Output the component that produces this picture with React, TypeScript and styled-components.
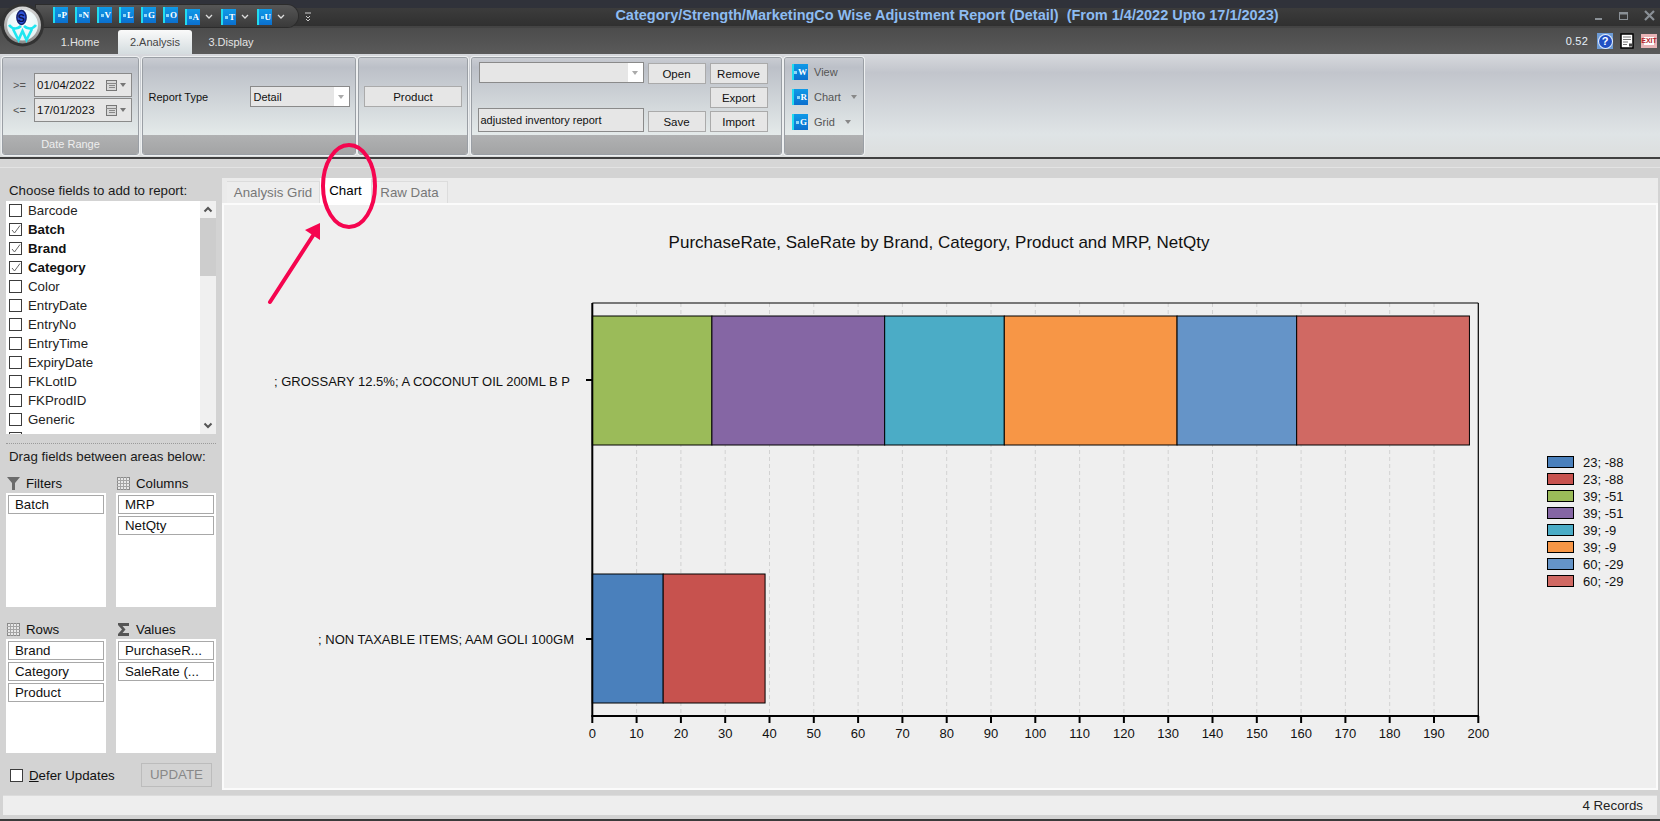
import React from "react";
import styled, { createGlobalStyle } from "styled-components";

const Global = createGlobalStyle`
  html, body { margin: 0; padding: 0; background: #d3d3d3; overflow: hidden; }
  * { box-sizing: border-box; }
  body { font-family: "Liberation Sans", Arial, sans-serif; }
`;

const Page = styled.div`
  position: relative;
  width: 1660px;
  height: 821px;
  display: flex;
  flex-direction: column;
  overflow: hidden;
  background: #d3d3d3;
  color: #111;
`;

/* ---------- title bar ---------- */
const TopBand = styled.div`
  height: 28px;
  flex: none;
  display: flex;
  background: linear-gradient(#30323a 0 8px, #3c3c3c 8px, #303030 26px, #444 26px);
`;
const QatPill = styled.div`
  margin: 5px 0 0 36px;
  height: 22px;
  width: 262px;
  padding: 2px 0 0 17px;
  display: flex;
  gap: 7px;
  border-radius: 0 11px 11px 0;
  background: linear-gradient(#565656, #3a3a3a);
  box-shadow: 0 0 0 1px #2c2c2c;
`;
const QatIcon = styled.span`
  width: 15px;
  height: 16px;
  flex: none;
  display: flex;
  align-items: center;
  justify-content: flex-end;
  padding-right: 1px;
  gap: 1px;
  background: linear-gradient(#0f9ae8, #0b6fce);
  border-left: 2px solid #22dcee;
  color: #fff;
  font: bold 9px "Liberation Serif", serif;
  &::before {
    content: "";
    width: 3px;
    height: 3px;
    background: #8fd6f6;
  }
`;
const QatGroup = styled.span`
  display: flex;
  align-items: center;
  gap: 4px;
`;
const QatCaret = styled.svg`
  width: 10px;
  height: 6px;
  flex: none;
`;
const Overflow = styled.svg`
  width: 6px;
  height: 9px;
  margin: 12px 0 0 7px;
  flex: none;
`;
const WindowTitle = styled.div`
  flex: 1;
  text-align: center;
  padding: 7px 12px 0 0;
  font-size: 14.5px;
  font-weight: bold;
  white-space: pre;
  color: #8dbcf2;
`;
const WindowButtons = styled.svg`
  width: 60px;
  height: 12px;
  margin: 10px 5px 0 0;
  flex: none;
`;
const TabRow = styled.div`
  height: 26px;
  flex: none;
  display: flex;
  align-items: flex-end;
  padding-left: 42px;
  background: linear-gradient(#4c4c4c, #5a5a5a);
`;
const AppTab = styled.div<{ $active?: boolean; $w: number }>`
  width: ${(p) => p.$w}px;
  height: 24px;
  display: flex;
  align-items: center;
  justify-content: center;
  font-size: 11px;
  color: ${(p) => (p.$active ? "#444" : "#e4e4e4")};
  border-radius: 3px 3px 0 0;
  background: ${(p) => (p.$active ? "linear-gradient(#fafafa, #d4dcdf)" : "transparent")};
`;
const StatusCluster = styled.div`
  margin-left: auto;
  height: 26px;
  display: flex;
  align-items: center;
  padding: 0 3px 0 0;
`;
const Version = styled.span`
  font-size: 11px;
  letter-spacing: 0.2px;
  color: #e8f0fa;
  margin-right: 9px;
`;
const HelpIcon = styled.span`
  width: 16px;
  height: 16px;
  background: #6d9bd6;
  display: flex;
  align-items: center;
  justify-content: center;
  margin-right: 7px;
  &::before {
    content: "?";
    width: 13px;
    height: 13px;
    border-radius: 50%;
    background: #2150c4;
    box-shadow: 0 0 0 1px #e6eefa;
    color: #fff;
    font: bold 11px/13px "Liberation Sans", sans-serif;
    text-align: center;
  }
`;
const DocIcon = styled.svg`
  width: 14px;
  height: 16px;
  margin-right: 7px;
`;
const ExitIcon = styled.span`
  width: 16px;
  height: 14px;
  background: #fff;
  color: #b3262d;
  font: bold 7px/14px "Liberation Sans", sans-serif;
  text-align: center;
  box-shadow: inset 0 0 0 3px #e8b4b6;
`;
const LogoMark = styled.svg`
  position: absolute;
  left: 0;
  top: 3px;
  width: 46px;
  height: 46px;
`;

/* ---------- ribbon ---------- */
const Ribbon = styled.div`
  height: 103px;
  flex: none;
  display: flex;
  gap: 2.5px;
  padding: 3px 0 2px 2px;
  background: linear-gradient(#d7d9dd, #c2c5cc 18%, #dfe4e6 78%, #dcdede 100%);
`;
const Group = styled.div<{ $w: number }>`
  width: ${(p) => p.$w}px;
  height: 98px;
  flex: none;
  display: flex;
  flex-direction: column;
  border: 1px solid #9a9fa5;
  border-radius: 3px;
  overflow: hidden;
  box-shadow: 0 0 0 1px #eef0f1;
`;
const GroupBody = styled.div`
  flex: 1;
  min-height: 0;
  display: flex;
  background: linear-gradient(#c9ccd2, #bcc0c8 12%, #e4eaea 100%);
`;
const GroupFooter = styled.div`
  height: 19px;
  flex: none;
  background: linear-gradient(#b0b1b2, #a3a4a5);
  color: #eee;
  font-size: 11px;
  line-height: 19px;
  text-align: center;
`;
const DateColumn = styled.div`
  padding: 15px 0 0 10px;
  display: flex;
  flex-direction: column;
  gap: 1px;
`;
const DateRow = styled.div`
  display: flex;
  align-items: center;
`;
const DateOp = styled.span`
  width: 21px;
  font-size: 11px;
  color: #555;
`;
const DateField = styled.div`
  width: 98px;
  height: 24px;
  display: flex;
  align-items: center;
  padding: 0 5px 0 2px;
  border: 1px solid #8a8a8a;
  background: #e6e6e6;
  font-size: 11.5px;
`;
const CalendarIcon = styled.svg`
  width: 11px;
  height: 11px;
  margin-left: auto;
`;
const SmallCaret = styled.svg`
  width: 6px;
  height: 4px;
  flex: none;
  margin-left: 3px;
`;
const CenterBody = styled(GroupBody)`
  align-items: center;
  padding: 0 5px;
`;
const FieldLabel = styled.span`
  width: 101px;
  margin-left: 1px;
  flex: none;
  font-size: 11px;
`;
const Combo = styled.div<{ $w: number }>`
  width: ${(p) => p.$w}px;
  height: 21px;
  flex: none;
  display: flex;
  align-items: center;
  padding-left: 3px;
  border: 1px solid #8a8a8a;
  background: #e6e6e6;
  font-size: 11px;
`;
const ComboArrow = styled.span`
  margin: 0 0 0 auto;
  width: 15px;
  height: 19px;
  background: #fff;
  display: flex;
  align-items: center;
  justify-content: center;
  &::before {
    content: "";
    border: 3.5px solid transparent;
    border-top: 4px solid #aaa;
    margin-top: 4px;
  }
`;
const PushButton = styled.button`
  width: 100%;
  height: 21px;
  padding: 0;
  border: 1px solid #aaa;
  background: #e6e6e6;
  color: #111;
  font: 11.5px "Liberation Sans", sans-serif;
`;
const ReportBody = styled(GroupBody)`
  padding: 4px 0 0 6px;
  gap: 4px;
`;
const ReportLeft = styled.div`
  width: 166px;
  height: 70px;
  display: flex;
  flex-direction: column;
  justify-content: space-between;
  align-items: flex-end;
`;
const NameInput = styled.div`
  width: 166px;
  height: 24px;
  line-height: 22px;
  padding-left: 2px;
  border: 1px solid #8a8a8a;
  background: #e6e6e6;
  font-size: 11px;
`;
const ButtonGrid = styled.div`
  margin-top: 1px;
  display: grid;
  grid-template-columns: 58px 58px;
  grid-template-rows: 21px 21px 21px;
  gap: 3px 4px;
  align-content: start;
`;
const GridSlot = styled.div<{ $row: number; $col: number }>`
  grid-row: ${(p) => p.$row};
  grid-column: ${(p) => p.$col};
`;
const CommandColumn = styled(GroupBody)`
  flex-direction: column;
  gap: 9px;
  padding: 6px 0 0 7px;
`;
const Command = styled.div`
  height: 16px;
  display: flex;
  align-items: center;
  font-size: 11px;
  color: #555;
`;
const CommandIcon = styled(QatIcon)`
  width: 16px;
  margin-right: 6px;
`;
const CommandCaret = styled.svg`
  width: 6px;
  height: 4px;
  margin-left: 10px;
`;

const Divider = styled.div`
  height: 2px;
  flex: none;
  background: #404040;
`;

/* ---------- main ---------- */
const Main = styled.div`
  height: 636px;
  flex: none;
  display: flex;
  background: linear-gradient(#d6d6d6 0 8px, #e3e3e3 8px 9px, #d3d3d3 9px);
`;
const FieldPanel = styled.div`
  width: 222px;
  flex: none;
  padding: 23px 6px 0;
  display: flex;
  flex-direction: column;
  font-size: 13.3px;
`;
const PanelHeading = styled.div`
  height: 18px;
  line-height: 18px;
  padding-left: 3px;
  white-space: nowrap;
  color: #1a1a1a;
`;
const FieldList = styled.div`
  margin-top: 1px;
  height: 233px;
  flex: none;
  display: flex;
  background: #fff;
  overflow: hidden;
`;
const FieldRows = styled.div`
  flex: 1;
  padding-left: 3px;
`;
const FieldRow = styled.label<{ $on?: boolean }>`
  height: 19px;
  display: flex;
  align-items: center;
  gap: 6px;
  font-weight: ${(p) => (p.$on ? "bold" : "normal")};
  color: ${(p) => (p.$on ? "#111" : "#222")};
`;
const Check = styled.span`
  width: 13px;
  height: 13px;
  flex: none;
  display: flex;
  background: #fff;
  border: 1px solid #3c3c3c;
`;
const ScrollBar = styled.div`
  width: 16px;
  flex: none;
  display: flex;
  flex-direction: column;
  background: #f0f0f0;
`;
const ScrollArrow = styled.svg`
  width: 16px;
  height: 17px;
  flex: none;
`;
const ScrollThumb = styled.div`
  height: 58px;
  flex: none;
  margin-bottom: auto;
  background: #cdcdcd;
`;
const Dots = styled.div`
  margin-top: 9px;
  height: 1px;
  flex: none;
  border-top: 1px dotted #9a9a9a;
  margin-bottom: 4px;
`;
const AreaGrid = styled.div`
  margin-top: 8px;
  display: grid;
  grid-template-columns: 100px 100px;
  grid-auto-rows: 146px;
  column-gap: 10px;
`;
const Area = styled.div`
  display: flex;
  flex-direction: column;
`;
const AreaHeader = styled.div`
  height: 19px;
  display: flex;
  align-items: center;
  gap: 6px;
  padding: 0 0 1px 1px;
`;
const AreaIcon = styled.svg`
  width: 13px;
  height: 13px;
  flex: none;
`;
const AreaBox = styled.div`
  height: 114px;
  padding: 2px;
  display: flex;
  flex-direction: column;
  gap: 2px;
  background: #fff;
`;
const AreaItem = styled.div`
  height: 19px;
  line-height: 17px;
  padding-left: 6px;
  border: 1px solid #a8a8a8;
  white-space: nowrap;
  overflow: hidden;
`;
const DeferRow = styled.div`
  margin-top: -3px;
  padding: 0 4px 0 4px;
  display: flex;
  align-items: center;
  gap: 6px;
`;
const UpdateButton = styled.div`
  margin-left: auto;
  width: 71px;
  height: 24px;
  line-height: 22px;
  text-align: center;
  border: 1px solid #bcbcbc;
  color: #888;
  font-size: 13.3px;
`;
const Underlined = styled.span`
  text-decoration: underline;
`;

const ReportArea = styled.div`
  flex: 1;
  min-width: 0;
  padding: 19px 2px 5px 0;
  display: flex;
  flex-direction: column;
`;
const ViewTabs = styled.div`
  height: 25px;
  flex: none;
  display: flex;
  padding: 3px 0 0 5px;
  background: #ebebeb;
  font-size: 13.3px;
`;
const ViewTab = styled.div<{ $active?: boolean; $w: number }>`
  width: ${(p) => p.$w}px;
  display: flex;
  align-items: center;
  justify-content: center;
  position: relative;
  color: ${(p) => (p.$active ? "#000" : "#777")};
  background: ${(p) => (p.$active ? "#fff" : "#ededed")};
  border-top: 1px solid ${(p) => (p.$active ? "#fff" : "#dcdcdc")};
  border-right: 1px solid #dcdcdc;
  margin-top: ${(p) => (p.$active ? "-3px" : "0")};
  margin-bottom: ${(p) => (p.$active ? "-2px" : "0")};
  padding-bottom: ${(p) => (p.$active ? "3px" : "0")};
`;
const ChartPanel = styled.div`
  flex: 1;
  min-height: 0;
  border: 2px solid #fbfbfb;
  background: #efefef;
`;
const ChartSvg = styled.svg`
  display: block;
  width: 1429px;
  height: 583px;
  font-family: "Liberation Sans", Arial, sans-serif;
`;
const Status = styled.div`
  height: 20px;
  flex: none;
  margin: 0 3px;
  padding-right: 14px;
  background: #eee;
  font-size: 13.3px;
  line-height: 20px;
  text-align: right;
  color: #222;
  border-top: 1px solid #dcdcdc;
`;
const BottomEdge = styled.div`
  height: 2px;
  flex: none;
  margin-top: 4px;
  background: #3a3a3a;
`;
const Annotation = styled.svg`
  position: absolute;
  left: 0;
  top: 0;
  width: 1660px;
  height: 821px;
  pointer-events: none;
`;

/* ---------- data ---------- */
const fields: [string, boolean][] = [
  ["Barcode", false], ["Batch", true], ["Brand", true], ["Category", true], ["Color", false],
  ["EntryDate", false], ["EntryNo", false], ["EntryTime", false], ["ExpiryDate", false],
  ["FKLotID", false], ["FKProdID", false], ["Generic", false], ["Generic Schedule", false],
];
const X0 = 592.3;
const K = 4.43;
const xs = (v: number) => X0 + K * v;
const topBar = [
  [0, 27, "#9bbb59"], [27, 66, "#8566a4"], [66, 93, "#4bacc6"],
  [93, 132, "#f79646"], [132, 159, "#6594c8"], [159, 198, "#d06963"],
] as [number, number, string][];
const lowBar = [[0, 16, "#4a80bc"], [16, 39, "#c7524e"]] as [number, number, string][];
const legend: [string, string][] = [
  ["#4a80bc", "23; -88"], ["#c7524e", "23; -88"], ["#9bbb59", "39; -51"], ["#8566a4", "39; -51"],
  ["#4bacc6", "39; -9"], ["#f79646", "39; -9"], ["#6594c8", "60; -29"], ["#d06963", "60; -29"],
];

const Caret = () => (
  <QatCaret viewBox="0 0 10 6">
    <path d="M2 1 L5 4 L8 1" fill="none" stroke="#ddd" strokeWidth="1.3" />
  </QatCaret>
);
const DownTri = ({ c = "#777" }: { c?: string }) => <path d="M0 0 H6 L3 4 Z" fill={c} />;

const GridGlyph = () => (
  <AreaIcon viewBox="0 0 13 13">
    <rect x="0.5" y="0.5" width="12" height="12" fill="#e8e8e8" stroke="#8a8a8a" />
    <path d="M0 3.5H13M0 6.5H13M0 9.5H13M3.5 0V13M6.5 0V13M9.5 0V13" stroke="#a4a4a4" strokeWidth="1" />
  </AreaIcon>
);
const FunnelGlyph = () => (
  <AreaIcon viewBox="0 0 13 13">
    <path d="M0 0 H13 L8 6 V13 H5 V6 Z" fill="#6b6b6b" />
  </AreaIcon>
);
const SigmaGlyph = () => (
  <AreaIcon viewBox="0 0 13 13">
    <path d="M1 0 H12 V3 H5.5 L8.5 6.5 L5.5 10 H12 V13 H1 V11 L5 6.5 L1 2 Z" fill="#555" />
  </AreaIcon>
);
const Tick = () => (
  <svg viewBox="0 0 11 11" width="11" height="11">
    <path d="M2 6 L4.5 9 L10 1.5" fill="none" stroke="#666" strokeWidth="1" />
  </svg>
);
const Calendar = () => (
  <CalendarIcon viewBox="0 0 11 11">
    <rect x="0.5" y="0.5" width="10" height="10" fill="#d8d8d8" stroke="#777" />
    <path d="M0 3.5H11M3 5.5H9M3 7.5H9" stroke="#888" />
  </CalendarIcon>
);

const Area1 = ({ icon, title, items }: { icon: React.ReactNode; title: string; items: string[] }) => (
  <Area>
    <AreaHeader>{icon}{title}</AreaHeader>
    <AreaBox>{items.map((t) => <AreaItem key={t}>{t}</AreaItem>)}</AreaBox>
  </Area>
);

export default function App() {
  return (
    <Page>
      <Global />
      <TopBand>
        <QatPill>
          {["P", "N", "V", "L", "G", "O"].map((l) => <QatIcon key={l}>{l}</QatIcon>)}
          {["A", "T", "U"].map((l) => (
            <QatGroup key={l}><QatIcon>{l}</QatIcon><Caret /></QatGroup>
          ))}
        </QatPill>
        <Overflow viewBox="0 0 6 9">
          <path d="M0 1H6M1 4L3 6L5 4M1 7L3 9L5 7" fill="none" stroke="#ccc" strokeWidth="1" />
        </Overflow>
        <WindowTitle>Category/Strength/MarketingCo Wise Adjustment Report (Detail)  (From 1/4/2022 Upto 17/1/2023)</WindowTitle>
        <WindowButtons viewBox="0 0 60 12">
          <rect x="0" y="8" width="7" height="2" fill="#8a9096" />
          <rect x="24.5" y="2.5" width="8" height="7" fill="none" stroke="#8a9096" />
          <rect x="24" y="2" width="9" height="2.5" fill="#8a9096" />
          <path d="M50 1 L59 10 M59 1 L50 10" stroke="#8a9096" strokeWidth="2.2" />
        </WindowButtons>
      </TopBand>
      <TabRow>
        <AppTab $w={76}>1.Home</AppTab>
        <AppTab $w={74} $active>2.Analysis</AppTab>
        <AppTab $w={78}>3.Display</AppTab>
        <StatusCluster>
          <Version>0.52</Version>
          <HelpIcon />
          <DocIcon viewBox="0 0 14 16">
            <rect x="1" y="1" width="12" height="14" fill="#fff" stroke="#000" strokeWidth="1.5" />
            <path d="M3 4H11M3 6.5H11M3 9H8M3 11.5H7" stroke="#777" />
            <rect x="9" y="10.5" width="3" height="3" fill="#444" />
          </DocIcon>
          <ExitIcon>EXIT</ExitIcon>
        </StatusCluster>
      </TabRow>
      <Ribbon>
        <Group $w={137}>
          <GroupBody>
            <DateColumn>
              <DateRow>
                <DateOp>&gt;=</DateOp>
                <DateField>01/04/2022<Calendar /><SmallCaret viewBox="0 0 6 4"><DownTri /></SmallCaret></DateField>
              </DateRow>
              <DateRow>
                <DateOp>&lt;=</DateOp>
                <DateField>17/01/2023<Calendar /><SmallCaret viewBox="0 0 6 4"><DownTri /></SmallCaret></DateField>
              </DateRow>
            </DateColumn>
          </GroupBody>
          <GroupFooter>Date Range</GroupFooter>
        </Group>
        <Group $w={214}>
          <CenterBody>
            <FieldLabel>Report Type</FieldLabel>
            <Combo $w={100}>Detail<ComboArrow /></Combo>
          </CenterBody>
          <GroupFooter />
        </Group>
        <Group $w={110}>
          <CenterBody>
            <PushButton>Product</PushButton>
          </CenterBody>
          <GroupFooter />
        </Group>
        <Group $w={311}>
          <ReportBody>
            <ReportLeft>
              <Combo $w={165}><ComboArrow /></Combo>
              <NameInput>adjusted inventory report</NameInput>
            </ReportLeft>
            <ButtonGrid>
              <GridSlot $row={1} $col={1}><PushButton>Open</PushButton></GridSlot>
              <GridSlot $row={1} $col={2}><PushButton>Remove</PushButton></GridSlot>
              <GridSlot $row={2} $col={2}><PushButton>Export</PushButton></GridSlot>
              <GridSlot $row={3} $col={1}><PushButton>Save</PushButton></GridSlot>
              <GridSlot $row={3} $col={2}><PushButton>Import</PushButton></GridSlot>
            </ButtonGrid>
          </ReportBody>
          <GroupFooter />
        </Group>
        <Group $w={80}>
          <CommandColumn>
            <Command><CommandIcon>W</CommandIcon>View</Command>
            <Command><CommandIcon>R</CommandIcon>Chart<CommandCaret viewBox="0 0 6 4"><DownTri c="#888" /></CommandCaret></Command>
            <Command><CommandIcon>G</CommandIcon>Grid<CommandCaret viewBox="0 0 6 4"><DownTri c="#888" /></CommandCaret></Command>
          </CommandColumn>
          <GroupFooter />
        </Group>
      </Ribbon>
      <Divider />
      <Main>
        <FieldPanel>
          <PanelHeading>Choose fields to add to report:</PanelHeading>
          <FieldList>
            <FieldRows>
              {fields.map(([name, on]) => (
                <FieldRow key={name} $on={on}>
                  <Check>{on && <Tick />}</Check>
                  {name}
                </FieldRow>
              ))}
            </FieldRows>
            <ScrollBar>
              <ScrollArrow viewBox="0 0 16 17">
                <path d="M4.5 10.5 L8 7 L11.5 10.5" fill="none" stroke="#555" strokeWidth="2" />
              </ScrollArrow>
              <ScrollThumb />
              <ScrollArrow viewBox="0 0 16 17">
                <path d="M4.5 6.5 L8 10 L11.5 6.5" fill="none" stroke="#555" strokeWidth="2" />
              </ScrollArrow>
            </ScrollBar>
          </FieldList>
          <Dots />
          <PanelHeading>Drag fields between areas below:</PanelHeading>
          <AreaGrid>
            <Area1 icon={<FunnelGlyph />} title="Filters" items={["Batch"]} />
            <Area1 icon={<GridGlyph />} title="Columns" items={["MRP", "NetQty"]} />
            <Area1 icon={<GridGlyph />} title="Rows" items={["Brand", "Category", "Product"]} />
            <Area1 icon={<SigmaGlyph />} title="Values" items={["PurchaseR...", "SaleRate (..."]} />
          </AreaGrid>
          <DeferRow>
            <Check />
            <span><Underlined>D</Underlined>efer Updates</span>
            <UpdateButton>UPDATE</UpdateButton>
          </DeferRow>
        </FieldPanel>
        <ReportArea>
          <ViewTabs>
            <ViewTab $w={93}>Analysis Grid</ViewTab>
            <ViewTab $w={52} $active>Chart</ViewTab>
            <ViewTab $w={76}>Raw Data</ViewTab>
          </ViewTabs>
          <ChartPanel>
            <ChartSvg viewBox="224 205 1429 583">
              <text x="939" y="248" textAnchor="middle" fontSize="17" fill="#111">
                PurchaseRate, SaleRate by Brand, Category, Product and MRP, NetQty
              </text>
              {Array.from({ length: 19 }, (_, i) => (
                <line key={i} x1={xs((i + 1) * 10)} x2={xs((i + 1) * 10)} y1="303" y2="716" stroke="#d2d2d2" strokeDasharray="4 3" />
              ))}
              {topBar.map(([a, b, c]) => (
                <rect key={a} x={xs(a)} y="316" width={K * (b - a)} height="129" fill={c} stroke="#000" />
              ))}
              {lowBar.map(([a, b, c]) => (
                <rect key={a} x={xs(a)} y="574" width={K * (b - a)} height="129" fill={c} stroke="#000" />
              ))}
              <line x1={X0} x2="1478.3" y1="303" y2="303" stroke="#000" strokeWidth="1.2" />
              <line x1="1478.3" x2="1478.3" y1="303" y2="716" stroke="#000" strokeWidth="1.2" />
              <line x1={X0} x2={X0} y1="303" y2="716" stroke="#000" strokeWidth="2" />
              <line x1={X0 - 1} x2="1479" y1="716" y2="716" stroke="#000" strokeWidth="2" />
              {Array.from({ length: 21 }, (_, i) => (
                <g key={i}>
                  <line x1={xs(i * 10)} x2={xs(i * 10)} y1="716" y2="723" stroke="#000" strokeWidth="2" />
                  <text x={xs(i * 10)} y="738" textAnchor="middle" fontSize="13" fill="#111">{i * 10}</text>
                </g>
              ))}
              <line x1="586" x2={X0} y1="380" y2="380" stroke="#000" strokeWidth="2" />
              <line x1="586" x2={X0} y1="639" y2="639" stroke="#000" strokeWidth="2" />
              <text x="570" y="386" textAnchor="end" fontSize="13" fill="#111">; GROSSARY 12.5%; A COCONUT OIL 200ML B P</text>
              <text x="574" y="644" textAnchor="end" fontSize="13" fill="#111">; NON TAXABLE ITEMS; AAM GOLI 100GM</text>
              {legend.map(([c, t], i) => (
                <g key={i}>
                  <rect x="1547.5" y={456.5 + i * 17} width="26" height="11" fill={c} stroke="#000" />
                  <text x="1583" y={467 + i * 17} fontSize="13" fill="#111">{t}</text>
                </g>
              ))}
            </ChartSvg>
          </ChartPanel>
        </ReportArea>
      </Main>
      <Status>4 Records</Status>
      <BottomEdge />
      <LogoMark viewBox="0 0 46 46">
        <defs>
          <radialGradient id="lg" cx="50%" cy="35%" r="70%">
            <stop offset="0%" stopColor="#ffffff" />
            <stop offset="100%" stopColor="#dff1f4" />
          </radialGradient>
          <linearGradient id="rg" x1="0" y1="0" x2="0" y2="1">
            <stop offset="0%" stopColor="#d8d8d8" />
            <stop offset="100%" stopColor="#8c8c8c" />
          </linearGradient>
        </defs>
        <circle cx="22.5" cy="22" r="21.5" fill="#333" />
        <circle cx="22.5" cy="22" r="18.5" fill="url(#rg)" />
        <circle cx="22.5" cy="22" r="15.5" fill="url(#lg)" />
        <ellipse cx="21.5" cy="14.5" rx="4.6" ry="7" fill="#2e55d8" stroke="#14206e" strokeWidth="1.5" />
        <text x="21.5" y="18.5" textAnchor="middle" fontSize="11" fontWeight="bold" fill="#0a1050">S</text>
        <path d="M9 22 C13 27 18 26 21 23 M36 22 C32 27 27 26 24 23 M13 26 L18.5 37 L22.5 28 L26.5 37 L32 26" fill="none" stroke="#1fe6f0" strokeWidth="2.6" />
      </LogoMark>
      <Annotation viewBox="0 0 1660 821">
        <ellipse cx="349" cy="186" rx="26" ry="41" fill="none" stroke="#f5054f" strokeWidth="4" />
        <line x1="270" y1="302" x2="314" y2="234" stroke="#f5054f" strokeWidth="4" strokeLinecap="round" />
        <polygon points="305,230 320,223 320,240" fill="#f5054f" />
      </Annotation>
    </Page>
  );
}
